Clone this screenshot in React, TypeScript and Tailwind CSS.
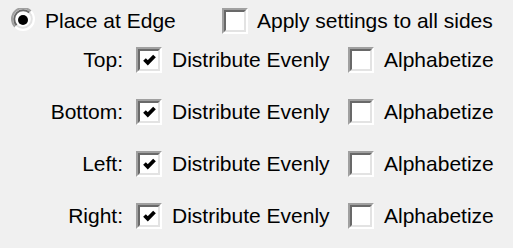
const SIDES = ['Top:', 'Bottom:', 'Left:', 'Right:']

// classic sunken checkbox, 2x scale
function CheckBox({ checked = false }: { checked?: boolean }) {
  return (
    <div className="w-[26px] h-[26px] shrink-0 flex border-2 border-t-[#a0a0a0] border-l-[#a0a0a0] border-b-white border-r-white">
      <div className="flex-1 flex items-center justify-center bg-white border-2 border-t-[#696969] border-l-[#696969] border-b-[#e3e3e3] border-r-[#e3e3e3]">
        {checked && (
          <svg className="w-[18px] h-[18px]" viewBox="0 0 18 18">
            <path d="M4.5 8.5 L7.8 11.8 L14.5 5" fill="none" stroke="#000" strokeWidth="3.8" strokeLinecap="butt" strokeLinejoin="miter" />
          </svg>
        )}
      </div>
    </div>
  )
}

// classic radio button, selected
function Radio() {
  return (
    <svg className="w-[26px] h-[26px] shrink-0" viewBox="0 0 26 26">
      <circle cx="13" cy="12" r="10" fill="#fff" />
      <path d="M5.22 19.78 A11 11 0 0 1 20.78 4.22" transform="translate(0 -1)" fill="none" stroke="#a0a0a0" strokeWidth="2" />
      <path d="M5.22 19.78 A11 11 0 0 0 20.78 4.22" transform="translate(0 -1)" fill="none" stroke="#fff" strokeWidth="2" />
      <path d="M6.64 18.36 A9 9 0 0 1 19.36 5.64" transform="translate(0 -1)" fill="none" stroke="#696969" strokeWidth="2" />
      <path d="M6.64 18.36 A9 9 0 0 0 19.36 5.64" transform="translate(0 -1)" fill="none" stroke="#e3e3e3" strokeWidth="2" />
      <circle cx="13" cy="12" r="5" fill="#000" />
    </svg>
  )
}

export default function App() {
  return (
    <div className="w-[513px] h-[248px] bg-[#f0f0f0] text-black text-[21px] leading-[24px] font-['Liberation_Sans',Arial,sans-serif] pt-[8px]">
      <div className="flex items-center h-[26px] pl-[10px]">
        <Radio />
        <span className="ml-[9px] w-[177px]">Place at Edge</span>
        <CheckBox />
        <span className="ml-[9px]">Apply settings to all sides</span>
      </div>

      <div className="mt-[13px] flex flex-col gap-[26px]">
        {SIDES.map(side => (
          <div key={side} className="flex items-center h-[26px]">
            <span className="w-[123px] text-right">{side}</span>
            <div className="ml-[13px]">
              <CheckBox checked />
            </div>
            <span className="ml-[10px] w-[176px]">Distribute Evenly</span>
            <CheckBox />
            <span className="ml-[10px]">Alphabetize</span>
          </div>
        ))}
      </div>
    </div>
  )
}
